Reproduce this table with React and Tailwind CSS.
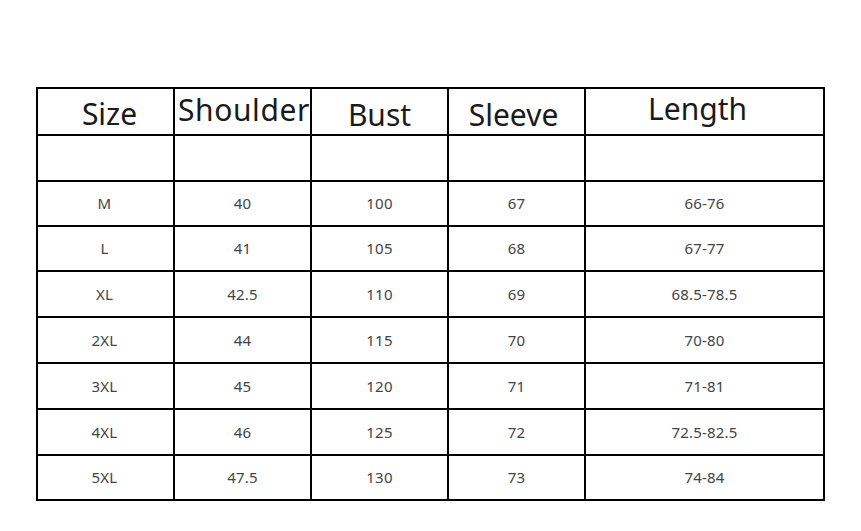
import React from "react";

const rows = [
  ["M", "40", "100", "67", "66-76"],
  ["L", "41", "105", "68", "67-77"],
  ["XL", "42.5", "110", "69", "68.5-78.5"],
  ["2XL", "44", "115", "70", "70-80"],
  ["3XL", "45", "120", "71", "71-81"],
  ["4XL", "46", "125", "72", "72.5-82.5"],
  ["5XL", "47.5", "130", "73", "74-84"],
];

const rowHeights = ["h-[44px]", "h-[43px]", "h-[43px]", "h-[44px]", "h-[44px]", "h-[44px]", "h-[44px]", "h-[43px]"];

const head = "h-[45px] bg-white flex items-end leading-none text-[30px] text-[#1a1a1a] whitespace-nowrap font-['Noto_Sans','Open_Sans',sans-serif]";

export default function App() {
  return (
    <div className="w-[861px] h-[531px] bg-white overflow-hidden">
      <div className="ml-[36px] mt-[87px] w-[789px] bg-black p-[2px] grid grid-cols-[135px_135px_135px_135px_237px] gap-[2px]">
        <div className={`${head} justify-center pb-[5px] pl-[8px]`}>Size</div>
        <div className={`${head} justify-start pb-[9px] pl-[3px] relative z-10 tracking-[0.6px]`}>Shoulder</div>
        <div className={`${head} justify-center pb-[4px]`}>Bust</div>
        <div className={`${head} justify-center pb-[4px] pr-[6px]`}>Sleeve</div>
        <div className={`${head} justify-center pb-[10px] pr-[14px]`}>Length</div>
        {[0, 1, 2, 3, 4].map((i) => (
          <div key={"e" + i} className="h-[44px] bg-white" />
        ))}
        {rows.map((r, ri) =>
          r.map((c, ci) => (
            <div
              key={ri + "-" + ci}
              className={`${rowHeights[ri + 1]} bg-white flex items-center justify-center text-[15px] text-[#444] tracking-[0.2px] font-['Noto_Sans','Open_Sans',sans-serif] ${ci === 0 ? "pr-[2px]" : ""}`}
            >
              {c}
            </div>
          ))
        )}
      </div>
    </div>
  );
}
